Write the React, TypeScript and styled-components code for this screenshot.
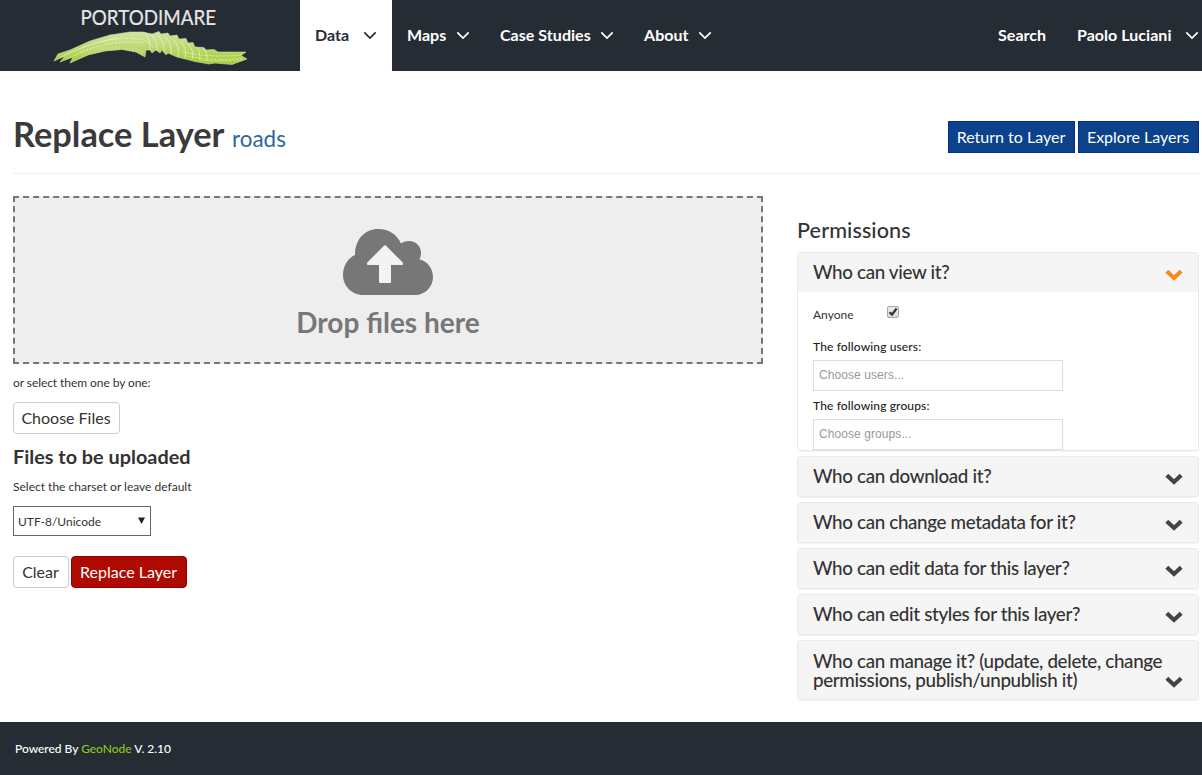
import React from "react";
import styled, { createGlobalStyle } from "styled-components";

const GlobalStyle = createGlobalStyle`
  * { box-sizing: border-box; }
  body {
    margin: 0;
    background: #fff;
    color: #333;
    font-family: Lato, "Liberation Sans", sans-serif;
    font-size: 12px;
    overflow: hidden;
  }
  h1, h2, h3, p { margin: 0; }
`;

const Page = styled.div`
  display: flex;
  flex-direction: column;
  width: 1202px;
  height: 775px;
`;

const Header = styled.header`
  display: flex;
  height: 71px;
  background: #262c33;
`;

const Brand = styled.a`
  width: 300px;
  height: 71px;
  svg { display: block; }
`;

const Nav = styled.nav`
  display: flex;
`;

const UserNav = styled(Nav)`
  margin-left: auto;
`;

const NavItem = styled.a<{ $active?: boolean; $width: number; $gap?: number }>`
  display: flex;
  align-items: center;
  width: ${(p) => p.$width}px;
  padding: 0 0 2px 15px;
  gap: ${(p) => p.$gap ?? 9.5}px;
  font-size: 16px;
  font-weight: 700;
  letter-spacing: 0.04px;
  white-space: nowrap;
  color: ${(p) => (p.$active ? "#262c33" : "#fff")};
  background: ${(p) => (p.$active ? "#fff" : "transparent")};
  svg { flex: none; margin-top: 2px; }
`;

const TitleBar = styled.div`
  display: flex;
  align-items: flex-start;
  justify-content: space-between;
  height: 103px;
  margin: 0 3px 0 13px;
  padding-top: 43px;
  border-bottom: 1px solid #eee;
`;

const Title = styled.h1`
  font-size: 34.4px;
  line-height: 40px;
  font-weight: 700;
  color: #3a3a3a;
`;

const LayerName = styled.a`
  font-size: 22.4px;
  font-weight: 400;
  color: #2c689c;
`;

const ButtonRow = styled.div<{ $gap: number }>`
  display: flex;
  gap: ${(p) => p.$gap}px;
`;

const Button = styled.button<{ $kind?: "primary" | "danger"; $width: number }>`
  width: ${(p) => p.$width}px;
  height: 32px;
  padding: 0 1px 0 0;
  font: 400 16px/30px Lato, sans-serif;
  white-space: nowrap;
  color: ${(p) => (p.$kind ? "#fff" : "#333")};
  background: ${(p) => (p.$kind === "primary" ? "#0c428b" : p.$kind === "danger" ? "#ae0a02" : "#fff")};
  border: 1px solid ${(p) => (p.$kind === "primary" ? "#00308f" : p.$kind === "danger" ? "#960000" : "#ccc")};
  border-radius: ${(p) => (p.$kind === "primary" ? 0 : 4)}px;
`;

const TitleButtons = styled(ButtonRow)`
  margin-top: 7px;
`;

const Content = styled.main`
  display: flex;
  justify-content: space-between;
  flex: 1;
  padding: 22px 3px 0 13px;
`;

const UploadColumn = styled.section`
  width: 750px;
`;

const DropZone = styled.div`
  display: flex;
  flex-direction: column;
  align-items: center;
  height: 168px;
  padding-top: 31px;
  border: 2px dashed #777;
  background: #eee;
  color: #777;
  svg { display: block; }
`;

const DropText = styled.h2`
  margin-top: 10px;
  font-size: 28px;
  line-height: 34px;
  font-weight: 700;
`;

const Hint = styled.p<{ $top: number; $bottom: number; $tracking: number }>`
  margin: ${(p) => p.$top}px 0 ${(p) => p.$bottom}px;
  font-size: 12px;
  line-height: 17px;
  letter-spacing: ${(p) => p.$tracking}px;
`;

const FilesHeading = styled.h3`
  margin-top: 10px;
  font-size: 19.85px;
  line-height: 24px;
  font-weight: 700;
  color: #333;
`;

const CharsetSelect = styled.div`
  display: flex;
  align-items: center;
  justify-content: space-between;
  width: 138px;
  height: 30px;
  margin-bottom: 20px;
  padding: 1px 5px 0 4px;
  border: 1px solid #666;
  font-size: 12px;
  svg { margin-top: -3px; }
`;

const PermissionsColumn = styled.aside`
  width: 402px;
  padding-top: 22px;
`;

const PermissionsHeading = styled.h2`
  margin-bottom: 10px;
  font-size: 21.6px;
  line-height: 24px;
  font-weight: 500;
  letter-spacing: 0.09px;
`;

const PanelGroup = styled.div`
  display: flex;
  flex-direction: column;
  gap: 5px;
`;

const Panel = styled.section<{ $height: number }>`
  height: ${(p) => p.$height}px;
  border: 1px solid #e9e9e9;
  border-radius: 4px;
  background: #fff;
  box-shadow: 0 1px 1px rgba(0, 0, 0, 0.05);
  overflow: hidden;
`;

const PanelHeader = styled.div<{ $tall?: boolean }>`
  display: flex;
  align-items: ${(p) => (p.$tall ? "flex-end" : "flex-start")};
  justify-content: space-between;
  height: ${(p) => (p.$tall ? 58 : 39)}px;
  padding: 9px 15px ${(p) => (p.$tall ? 10 : 0)}px 15px;
  background: #f5f5f5;
  font-size: 18.8px;
  line-height: 19px;
  letter-spacing: -0.34px;
  font-weight: 500;
  white-space: pre-line;
  svg { flex: none; margin: 7px 0 ${(p) => (p.$tall ? 1 : 0)}px; }
`;

const PanelBody = styled.div`
  padding: 13px 15px 0;
`;

const AnyoneRow = styled.label`
  display: flex;
  height: 27px;
  font-size: 12px;
  line-height: 19px;
  span { width: 74px; }
`;

const CheckBox = styled.i`
  display: flex;
  align-items: center;
  justify-content: center;
  width: 12px;
  height: 12px;
  margin-top: 1px;
  border: 1px solid #a5a5a5;
  border-radius: 2px;
  background: linear-gradient(#ececec, #dcdcdc);
`;

const FieldLabel = styled.div`
  height: 28px;
  padding-top: 7px;
  font-size: 12px;
  line-height: 15px;
  font-weight: 500;
  letter-spacing: 0.13px;
  color: #222;
`;

const Field = styled.input`
  display: block;
  width: 250px;
  height: 31px;
  padding: 0 5px 2px;
  border: 1px solid #ddd;
  font: 12px "Liberation Sans", sans-serif;
  letter-spacing: 0.08px;
  color: #333;
  &::placeholder { color: #999; opacity: 1; }
`;

const Footer = styled.footer`
  height: 53px;
  padding: 19px 15px;
  background: #262c33;
  color: #fff;
  font-size: 12px;
  line-height: 15px;
  font-weight: 500;
  letter-spacing: -0.02px;
  a { color: #93c51c; }
`;

function Caret() {
  return (
    <svg width="14" height="9" viewBox="0 0 14 9" fill="none" stroke="currentColor" strokeWidth="1.7">
      <path d="M1.3 1.3L7 7L12.7 1.3" />
    </svg>
  );
}

function ChevronDown({ color = "#444" }: { color?: string }) {
  return (
    <svg width="18" height="12" viewBox="0 0 18 12" fill="none" stroke={color} strokeWidth="4.2" strokeLinejoin="miter">
      <path d="M1.8 2.3L9 9L16.2 2.3" />
    </svg>
  );
}

function CloudUpload() {
  return (
    <svg width="90" height="66" viewBox="0 0 90 66">
      <path
        fill="#777"
        d="M20 66C9 66 0 57 0 46C0 37 5 29 12 26C12 10 22 0 35.500 0C46 0 54 5.500 58 14.500C60 13 62.500 12 66 12C73 12 78 17 78 24C78 26.500 77.500 28.500 76.500 30.500C84 32 90 39 90 48C90 58 82 66 72 66Z"
      />
      <path
        fill="#f3f3f3"
        d="M41.200 16.600Q42 15.800 42.800 16.600L59.500 33.300Q60.500 34.800 59.500 36H48V53Q48 54 47 54H37Q36 54 36 53V36H24.500Q23.500 34.800 24.500 33.300Z"
      />
    </svg>
  );
}

const WAVE =
  "M54 61L58 54L70 50L90 41L110 35L130 32L143 32L152 34L159 31.500L161 34L168 33L170 36L177 35L179 39L186 38.500L188 43L193 42.500L195 47L204 47.500L206 50L214 49.500L218 52L230 52L246 52L241 55.500L247 59L232 64.500L215 63L209 64L195 61.500L185 59L177 57L168 53L166 55L162 50L160 53L156 50L152 53L150 50L146 50L145 57L136 52L122 49.500L105 51L88 55L70 63L73 57L60 62L65 56Z";

function Logo() {
  const ribs = Array.from({ length: 9 }, (_, i) => i);
  const combs = Array.from({ length: 20 }, (_, i) => i);
  return (
    <svg width="300" height="71" viewBox="0 0 300 71">
      <defs>
        <linearGradient id="wave" x1="0" y1="0" x2="0" y2="1">
          <stop offset="0" stopColor="#d3e5a2" />
          <stop offset="0.5" stopColor="#bcd970" />
          <stop offset="1" stopColor="#a3cc35" />
        </linearGradient>
        <clipPath id="waveClip">
          <path d={WAVE} />
        </clipPath>
      </defs>
      <text x="80.500" y="25" fontSize="20.500" fill="#e6e7e8" stroke="#e6e7e8" strokeWidth="0.200" fontFamily="Lato, sans-serif" textLength="135.500" lengthAdjust="spacingAndGlyphs">
        PORTODIMARE
      </text>
      <path d={WAVE} fill="url(#wave)" stroke="#cfdcae" strokeWidth="0.600" />
      <g clipPath="url(#waveClip)" fill="none" stroke="#f4f9e4" strokeWidth="0.800">
        <g strokeDasharray="2.500 1.200" opacity="0.750">
          <path d="M56 61Q98 35 140 39Q150 41 154 48" />
          <path d="M66 60Q104 38 144 43" />
          <path d="M60 57Q90 43 118 38" />
          <path d="M183 52Q210 58 244 55" />
          <path d="M188 56Q212 62 244 58" />
          <path d="M200 60Q220 62 244 60" />
        </g>
        <g opacity="0.450">
          {combs.map((i) => (
            <path
              key={i}
              d={`M${84 + i * 3} ${57 - Math.sin((i / 19) * Math.PI) * 5}L${80 + i * 3.3} ${50 - Math.sin((i / 19) * Math.PI) * 4}`}
              stroke="#f4f9e4"
            />
          ))}
        </g>
        <g opacity="0.700">
          {ribs.map((i) => (
            <path key={i} d={`M${143 + i * 7.5} ${31 + i * 2.1}Q${151 + i * 7.3} ${39 + i * 2} ${150 + i * 7} ${53 + i}`} />
          ))}
        </g>
      </g>
    </svg>
  );
}

const closedPanels = [
  "Who can download it?",
  "Who can change metadata for it?",
  "Who can edit data for this layer?",
  "Who can edit styles for this layer?",
];

export default function App() {
  return (
    <>
      <GlobalStyle />
      <Page>
        <Header>
          <Brand><Logo /></Brand>
          <Nav>
            <NavItem $active $width={92} $gap={13.5}>Data<Caret /></NavItem>
            <NavItem $width={93}>Maps<Caret /></NavItem>
            <NavItem $width={144} $gap={9}>Case Studies<Caret /></NavItem>
            <NavItem $width={99}>About<Caret /></NavItem>
          </Nav>
          <UserNav>
            <NavItem $width={79}>Search</NavItem>
            <NavItem $width={140} $gap={13}>Paolo Luciani<Caret /></NavItem>
          </UserNav>
        </Header>
        <TitleBar>
          <Title>Replace Layer <LayerName>roads</LayerName></Title>
          <TitleButtons $gap={3}>
            <Button $kind="primary" $width={127}>Return to Layer</Button>
            <Button $kind="primary" $width={121}>Explore Layers</Button>
          </TitleButtons>
        </TitleBar>
        <Content>
          <UploadColumn>
            <DropZone>
              <CloudUpload />
              <DropText>Drop files here</DropText>
            </DropZone>
            <Hint $top={10} $bottom={11} $tracking={-0.07}>or select them one by one:</Hint>
            <Button $width={107}>Choose Files</Button>
            <FilesHeading>Files to be uploaded</FilesHeading>
            <Hint $top={10} $bottom={11} $tracking={0}>Select the charset or leave default</Hint>
            <CharsetSelect>
              UTF-8/Unicode
              <svg width="7" height="7" viewBox="0 0 7 7"><path d="M0 0.500H7L3.500 7Z" fill="#222" /></svg>
            </CharsetSelect>
            <ButtonRow $gap={2}>
              <Button $width={56}>Clear</Button>
              <Button $kind="danger" $width={116}>Replace Layer</Button>
            </ButtonRow>
          </UploadColumn>
          <PermissionsColumn>
            <PermissionsHeading>Permissions</PermissionsHeading>
            <PanelGroup>
              <Panel $height={199}>
                <PanelHeader>Who can view it?<ChevronDown color="#f58a1f" /></PanelHeader>
                <PanelBody>
                  <AnyoneRow>
                    <span>Anyone</span>
                    <CheckBox>
                      <svg width="10" height="10" viewBox="0 0 10 10" fill="none" stroke="#333" strokeWidth="2.200">
                        <path d="M1.500 5.200L4 7.600L8.600 1.500" />
                      </svg>
                    </CheckBox>
                  </AnyoneRow>
                  <FieldLabel>The following users:</FieldLabel>
                  <Field placeholder="Choose users..." />
                  <FieldLabel>The following groups:</FieldLabel>
                  <Field placeholder="Choose groups..." />
                </PanelBody>
              </Panel>
              {closedPanels.map((title) => (
                <Panel key={title} $height={41}>
                  <PanelHeader>{title}<ChevronDown /></PanelHeader>
                </Panel>
              ))}
              <Panel $height={60}>
                <PanelHeader $tall>
                  {"Who can manage it? (update, delete, change\npermissions, publish/unpublish it)"}
                  <ChevronDown />
                </PanelHeader>
              </Panel>
            </PanelGroup>
          </PermissionsColumn>
        </Content>
        <Footer>Powered By <a>GeoNode</a> V. 2.10</Footer>
      </Page>
    </>
  );
}
